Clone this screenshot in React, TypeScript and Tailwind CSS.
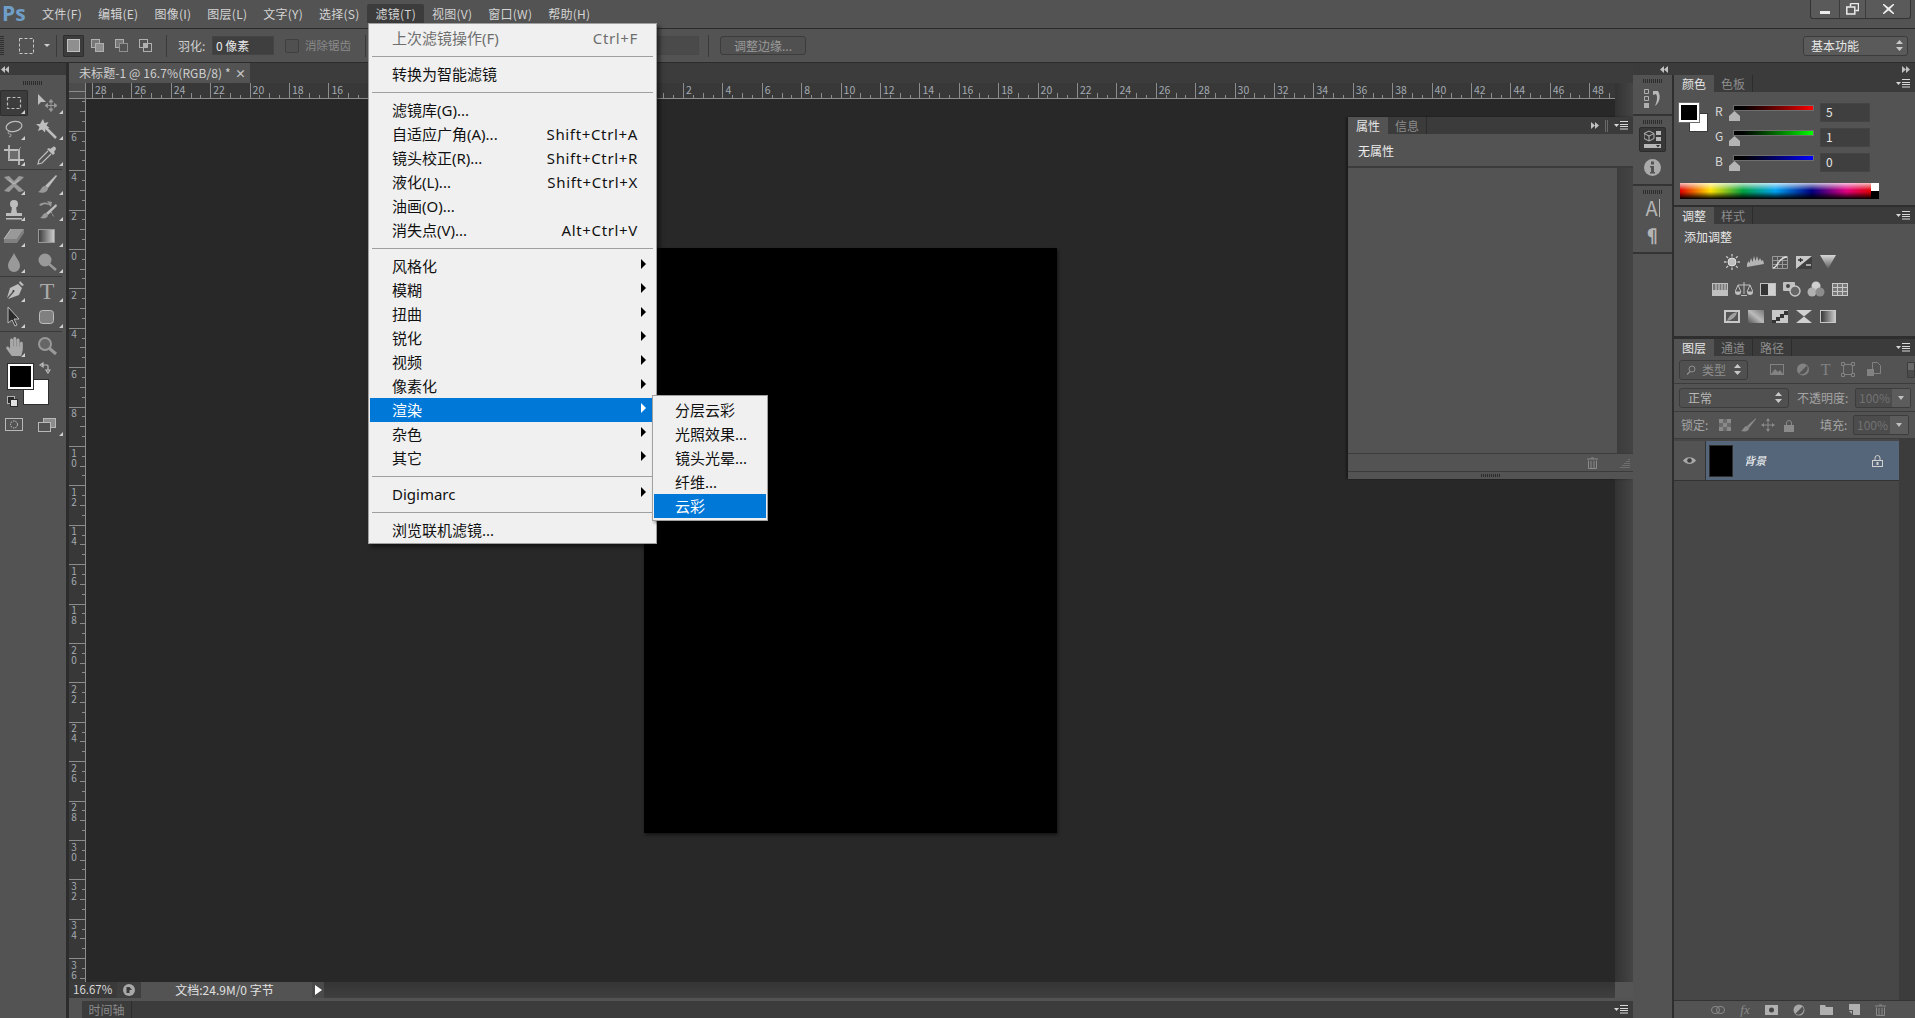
import { FaHandPaper } from "react-icons/fa";

const menuBar = ["文件(F)", "编辑(E)", "图像(I)", "图层(L)", "文字(Y)", "选择(S)", "滤镜(T)", "视图(V)", "窗口(W)", "帮助(H)"];

type Entry = { label?: string; key?: string; sub?: boolean; dim?: boolean; active?: boolean };
const filterMenu: Entry[] = [
  { label: "上次滤镜操作(F)", key: "Ctrl+F", dim: true },
  {},
  { label: "转换为智能滤镜" },
  {},
  { label: "滤镜库(G)..." },
  { label: "自适应广角(A)...", key: "Shift+Ctrl+A" },
  { label: "镜头校正(R)...", key: "Shift+Ctrl+R" },
  { label: "液化(L)...", key: "Shift+Ctrl+X" },
  { label: "油画(O)..." },
  { label: "消失点(V)...", key: "Alt+Ctrl+V" },
  {},
  { label: "风格化", sub: true },
  { label: "模糊", sub: true },
  { label: "扭曲", sub: true },
  { label: "锐化", sub: true },
  { label: "视频", sub: true },
  { label: "像素化", sub: true },
  { label: "渲染", sub: true, active: true },
  { label: "杂色", sub: true },
  { label: "其它", sub: true },
  {},
  { label: "Digimarc", sub: true },
  {},
  { label: "浏览联机滤镜..." },
];
const renderMenu = ["分层云彩", "光照效果...", "镜头光晕...", "纤维...", "云彩"];

const hLabels = Array.from({ length: 39 }, (_, n) => Math.abs(n - 14) * 2);
const vLabels = [6, 4, 2, 0, 2, 4, 6, 8, 10, 12, 14, 16, 18, 20, 22, 24, 26, 28, 30, 32, 34, 36];

function Grip() {
  return <div className="h-[4px] w-[20px] bg-[repeating-linear-gradient(to_right,#2c2c2c_0_1px,transparent_1px_2px)]" />;
}

function PanelMenu() {
  return (
    <svg width="14" height="9" viewBox="0 0 14 9">
      <path d="M0 3h5L2.5 6z" fill="#d8d8d8" />
      <path d="M6 .5h8M6 3.5h8M6 5.5h8M6 8h8" stroke="#d8d8d8" strokeWidth="1" />
    </svg>
  );
}

function DoubleArrow({ left }: { left?: boolean }) {
  return (
    <svg width="8" height="7" viewBox="0 0 8 7">
      {left ? <path d="M4 0v7L0 3.5zM8 0v7L4 3.5z" fill="#c0c0c0" /> : <path d="M0 0v7l4-3.5zM4 0v7l4-3.5z" fill="#c0c0c0" />}
    </svg>
  );
}

function UpDown() {
  return (
    <svg width="7" height="11" viewBox="0 0 7 11">
      <path d="M3.5 0 7 4H0zM3.5 11 7 7H0z" fill="#c8c8c8" />
    </svg>
  );
}

function Tabs({ tabs, right }: { tabs: string[]; right?: React.ReactNode }) {
  return (
    <div className="flex h-[17px] items-stretch bg-[#3b3b3b]">
      {tabs.map((t, i) => (
        <div
          key={t}
          className={
            i === 0
              ? "flex w-[40px] items-center justify-center bg-[#535353] text-[12px] leading-none text-[#e6e6e6]"
              : "flex w-[39px] items-center justify-center border-r border-[#2c2c2c] text-[12px] leading-none text-[#8c8c8c]"
          }
        >
          {t}
        </div>
      ))}
      <div className="ml-auto flex items-center pr-[5px]">{right ?? <PanelMenu />}</div>
    </div>
  );
}

function Tool({ children, corner = true, selected }: { children: React.ReactNode; corner?: boolean; selected?: boolean }) {
  return (
    <div className={selected ? "relative flex h-[26px] items-center justify-center rounded-[2px] bg-[#3c3c3c] shadow-[inset_0_0_0_1px_#2e2e2e]" : "relative flex h-[26px] items-center justify-center"}>
      {children}
      {corner && <span className="absolute bottom-[2px] right-[3px] h-0 w-0 border-b-[4px] border-l-[4px] border-b-[#d0d0d0] border-l-transparent" />}
    </div>
  );
}

const ico = { width: 22, height: 22, viewBox: "0 0 22 22" };
const G = "#999999";
const L = "#bdbdbd";

const toolRows: React.ReactNode[][] = [
  [
    <svg {...ico}><rect x="4.5" y="5.5" width="13" height="11" fill="none" stroke={L} strokeWidth="1.2" strokeDasharray="3 2" /></svg>,
    <svg {...ico}><path d="M2 2v11l3-3h5z" fill={L} /><path d="M15 9v9M10.500 13.500h9M15 7.500l-2 2.500h4zM15 19.500l-2-2.500h4zM9 13.500l2.500-2v4zM21 13.500l-2.500-2v4z" stroke={G} fill={G} strokeWidth="1" /></svg>,
  ],
  [
    <svg {...ico}><ellipse cx="11" cy="8.500" rx="8" ry="5" fill="none" stroke={L} strokeWidth="1.200" transform="rotate(-12 11 8.500)" /><path d="M6 13c-2 2 0 3 1 3s2 2-1 3" fill="none" stroke={G} strokeWidth="1.200" /></svg>,
    <svg {...ico}><path d="M9 9l11 11" stroke={L} strokeWidth="2.500" /><path d="M7 1l1.500 4 4-1-2 3.500 3 2.500-4 .5-.5 4-3-3-4 1.500 1.500-4L0 6l4 .0z" fill={L} /></svg>,
  ],
  [
    <svg {...ico}><path d="M6 1v15h15M1 6h15v15" fill="none" stroke={L} strokeWidth="1.800" /><path d="M6 16L18 3" stroke={G} strokeWidth="1" /><rect x="7" y="7" width="8" height="8" fill="#6c6c6c" /></svg>,
    <svg {...ico}><path d="M12 7L3 16l-1 4 4-1 9-9" fill="none" stroke={L} strokeWidth="1.200" /><path d="M11 5l6 6 2-2-1-1 2-3c0-2-2-3-3-2l-3 2-1-1z" fill={L} /></svg>,
  ],
  [
    <svg {...ico}><path d="M1 4l5-1 5 5 5-5 5 1-3 3-5 4 5 4 3 3-5 1-5-5-5 5-5-1 3-3 5-4-5-4z" fill={G} /><path d="M6 7l5 4 5-4" stroke={L} fill="none" /></svg>,
    <svg {...ico}><path d="M20 2L9 13l3 2L21 3z" fill={L} /><path d="M9 13c-4 0-3 4-7 6 5 2 10 0 10-4z" fill={G} /></svg>,
  ],
  [
    <svg {...ico}><circle cx="11" cy="5" r="4" fill={L} /><path d="M9 8h4l1 6H8zM3 14h16v3H3zM3 19h16v1.500H3z" fill={L} /></svg>,
    <svg {...ico}><path d="M3 6c3-3 7-3 10-1l-2-3 5 1-1 5-2-2c-3-1-6-1-8 1z" fill={G} /><path d="M20 5L10 14l2 2L21 7z" fill={L} /><path d="M10 14c-3 0-3 3-6 5 5 1 8 0 8-3z" fill={G} /><path d="M15 13l3 5" stroke={L} strokeDasharray="1 1" /></svg>,
  ],
  [
    <svg {...ico}><path d="M1 14l7-10h13l-7 10z" fill={G} /><path d="M1 14h13v4H1zM14 14l7-10v4l-7 10z" fill="#808080" /><path d="M8 4l-7 10" stroke={L} /></svg>,
    <svg {...ico}><defs><linearGradient id="gt"><stop offset="0" stopColor="#3a3a3a" /><stop offset="1" stopColor="#d0d0d0" /></linearGradient></defs><rect x="2.500" y="4.500" width="16" height="13" fill="url(#gt)" stroke={G} /></svg>,
  ],
  [
    <svg {...ico}><path d="M11 2c2 5 6 8 6 13a6 6 0 0 1-12 0c0-5 4-8 6-13z" fill={G} /></svg>,
    <svg {...ico}><circle cx="9" cy="9" r="6.500" fill={G} /><path d="M13 13l7 6" stroke={G} strokeWidth="2.500" /></svg>,
  ],
  [
    <svg {...ico}><path d="M17 1l4 4-2 1-3-3zM15 4l4 4-3 7-11 4 6-7-1-1-6 7 3-10z" fill={L} /><circle cx="10.500" cy="11" r="1" fill="#333" /></svg>,
    <span className="font-['Liberation_Serif',serif] text-[24px] leading-none text-[#aaaaaa]">T</span>,
  ],
  [
    <svg {...ico}><path d="M5 1v16l4-3 3 6 2-1-3-6h5z" fill="#2b2b2b" stroke={L} strokeWidth="1" /></svg>,
    <svg {...ico}><rect x="3.500" y="4.500" width="14" height="13" rx="3" fill="#808080" stroke={L} /></svg>,
  ],
  [
    <FaHandPaper className="text-[19px] text-[#a8a8a8]" />,
    <svg {...ico}><circle cx="9" cy="9" r="6" fill="#666" stroke={G} strokeWidth="2" /><path d="M13 13l7 6" stroke={G} strokeWidth="3" /></svg>,
  ],
];

function ToolDivider() {
  return <div className="my-[1px] h-px w-[62px] bg-[#3a3a3a]" />;
}

function Toolbar() {
  return (
    <aside className="flex w-[66px] shrink-0 flex-col bg-[#535353]">
      <div className="flex h-[12px] items-center bg-[#3b3b3b] pl-[1px]">
        <DoubleArrow left />
      </div>
      <div className="flex h-[15px] items-center justify-center">
        <Grip />
      </div>
      {toolRows.map((row, r) => (
        <div key={r}>
          {(r === 3 || r === 7 || r === 9) && <ToolDivider />}
          <div className="grid grid-cols-[28px_38px]">
            <Tool selected={r === 0}>{row[0]}</Tool>
            <Tool corner={r !== 9}>{row[1]}</Tool>
          </div>
        </div>
      ))}
      <div className="relative mt-[1px] h-[52px]">
        <div className="absolute left-[23px] top-[19px] h-[26px] w-[26px] border border-[#2e2e2e] bg-white" />
        <div className="absolute left-[8px] top-[4px] h-[25px] w-[25px] border-2 border-white bg-black outline outline-1 outline-[#2e2e2e]" />
        <svg className="absolute left-[39px] top-[2px]" width="12" height="12" viewBox="0 0 12 12">
          <path d="M1 3l3-2v4zM9 11l2-3H7zM3 3h5q1 0 1 1v4" fill="none" stroke="#bdbdbd" strokeWidth="1.200" />
        </svg>
        <svg className="absolute left-[7px] top-[36px]" width="11" height="11" viewBox="0 0 11 11">
          <rect x="0.500" y="0.500" width="7" height="7" fill="#2a2a2a" stroke="#b0b0b0" />
          <rect x="3.500" y="3.500" width="7" height="7" fill="#e0e0e0" stroke="#2a2a2a" />
        </svg>
      </div>
      <div className="grid h-[26px] grid-cols-[28px_38px]">
        <div className="flex items-center justify-center">
          <svg width="18" height="14" viewBox="0 0 18 14">
            <rect x="0.500" y="0.500" width="17" height="12" fill="none" stroke="#b8b8b8" />
            <circle cx="9" cy="6.500" r="3.500" fill="none" stroke="#d0d0d0" strokeDasharray="1.500 1" />
          </svg>
        </div>
        <Tool>
          <svg width="18" height="14" viewBox="0 0 18 14">
            <rect x="5.500" y="0.500" width="12" height="9" fill="#8d8d8d" stroke="#b8b8b8" />
            <rect x="0.500" y="4.500" width="12" height="9" fill="#535353" stroke="#b8b8b8" />
          </svg>
        </Tool>
      </div>
    </aside>
  );
}

function HRuler() {
  return (
    <svg width="1529" height="16" className="block shrink-0">
      {hLabels.map((v, n) => {
        const x = 6 + n * 39.4;
        return (
          <g key={n}>
            <path d={`M${Math.round(x) + 0.5} 0V16`} stroke="#8c8c8c" />
            {[1, 2, 3].map((q) => (
              <path key={q} d={`M${Math.round(x + q * 9.85) + 0.5} ${q === 2 ? 10 : 12}V16`} stroke="#8c8c8c" />
            ))}
            <text x={x + 3} y={11} fontSize="10.5" fill="#a3aab2">{v}</text>
          </g>
        );
      })}
      <path d="M0 15.500H1529" stroke="#8c8c8c" />
    </svg>
  );
}

function VRuler() {
  return (
    <svg width="17" height="883" className="block shrink-0 overflow-visible bg-[#383838]">
      {[-1, ...vLabels.map((_, i) => i)].map((k) => {
        const y = 130.7 + k * 39.4 - 99;
        return (
          <g key={k}>
            <path d={`M0 ${Math.round(y) + 0.5}H17`} stroke="#8c8c8c" />
            {[1, 2, 3].map((q) => (
              <path key={q} d={`M${q === 2 ? 11 : 13} ${Math.round(y + q * 9.85) + 0.5}H17`} stroke="#8c8c8c" />
            ))}
            {k >= 0 && (
              <text x={5} y={y + 2} fontSize="10" fill="#a3aab2" className="[text-orientation:upright] [writing-mode:vertical-rl]">
                {vLabels[k]}
              </text>
            )}
          </g>
        );
      })}
      <path d="M16.500 0V883" stroke="#8c8c8c" />
    </svg>
  );
}

const scrollCol = "w-[18px] shrink-0 bg-gradient-to-r from-[#333333] to-[#454545]";

function DocArea() {
  return (
    <main className="flex min-w-0 flex-1 flex-col">
      <div className="flex h-[20px] shrink-0 bg-[#3c3c3c]">
        <div className="flex w-[181px] items-center justify-between bg-[#535353] pl-[10px] pr-[4px] text-[12px] leading-none tracking-[0.1px] text-[#cfcfcf]">
          <span>未标题-1 @ 16.7%(RGB/8) *</span>
          <span className="text-[11px] font-bold text-[#c8c8c8]">×</span>
        </div>
      </div>
      <div className="flex h-[16px] shrink-0 bg-[#383838]">
        <div className="h-[16px] w-[17px] shrink-0 border-b border-r border-[#8c8c8c] bg-[#4c4c4c]" />
        <HRuler />
        <div className={scrollCol} />
      </div>
      <div className="flex min-h-0 flex-1">
        <VRuler />
        <div className="flex flex-1 items-center justify-center bg-[#282828]">
          <div className="h-[585px] w-[413px] bg-black shadow-[1px_2px_3px_rgba(0,0,0,0.5)]" />
        </div>
        <div className={scrollCol} />
      </div>
      <div className="flex h-[16px] shrink-0 bg-[#3a3a3a] text-[12px] leading-none">
        <div className="flex w-[48px] items-center pl-[4px] text-[11.5px] text-[#d8d8d8]">16.67%</div>
        <div className="flex w-[24px] items-center justify-center bg-[#3f3f3f]">
          <svg width="12" height="12" viewBox="0 0 12 12">
            <circle cx="6" cy="6" r="6" fill="#a8a8a8" />
            <path d="M3.500 3h3l2.500 3H6.500v3h-3z" fill="#3a3a3a" />
          </svg>
        </div>
        <div className="flex w-[171px] items-center justify-center bg-[#535353] pr-[4px] text-[#e0e0e0]">文档:24.9M/0 字节</div>
        <div className="flex w-[12px] items-center justify-center bg-[#4a4a4a]">
          <span className="h-0 w-0 border-y-[5px] border-l-[7px] border-y-transparent border-l-white" />
        </div>
        <div className="flex-1 bg-gradient-to-b from-[#353535] to-[#3f3f3f]" />
        <div className="w-[18px] bg-[#555555]" />
      </div>
      <div className="mt-[3px] flex h-[17px] shrink-0 bg-[#3c3c3c]">
        <div className="w-[13px] bg-[#535353]" />
        <div className="flex w-[50px] items-center justify-center border-r border-[#2c2c2c] text-[12px] leading-none text-[#8a8a8a]">时间轴</div>
        <div className="ml-auto flex items-center pr-[5px]">
          <PanelMenu />
        </div>
      </div>
    </main>
  );
}

function Dock() {
  return (
    <div className="flex w-[39px] shrink-0 flex-col bg-[#535353]">
      <div className="flex h-[41px] flex-col items-center border-b-2 border-[#343434] pt-[4px]">
        <Grip />
        <svg className="mt-[5px]" width="20" height="22" viewBox="0 0 20 22">
          <path d="M1.500 1.500h4v4h-4zM1.500 8.500h4v4h-4z" fill="none" stroke="#b0b0b0" />
          <rect x="1" y="15" width="5" height="5" fill="#b0b0b0" />
          <path d="M10 3h5c3 5 2 11-3 15 2-5 3-9 1-12l-3 1z" fill="#b8b8b8" />
        </svg>
      </div>
      <div className="flex h-[70px] flex-col items-center border-b-2 border-[#343434] pt-[4px]">
        <Grip />
        <div className="mt-[3px] flex h-[25px] w-[27px] items-center justify-center rounded-[3px] bg-[#383838] shadow-[inset_0_0_0_1px_#2c2c2c]">
          <svg width="18" height="20" viewBox="0 0 18 20">
            <path d="M5 1l5 2.500v5L5 11 0 8.500v-5z" fill="none" stroke="#b8b8b8" />
            <path d="M0 3.500l5 2.500 5-2.500M5 6v5" stroke="#b8b8b8" fill="none" />
            <path d="M12 1h5v4h-5zM12 7h5v4h-5z" fill="#b8b8b8" />
            <rect x="0" y="14" width="17" height="4" fill="#b8b8b8" />
            <path d="M12 15h4l-2 2.500z" fill="#333" />
          </svg>
        </div>
        <svg className="mt-[7px]" width="17" height="17" viewBox="0 0 17 17">
          <circle cx="8.500" cy="8.500" r="8.500" fill="#aaaaaa" />
          <rect x="7" y="2.500" width="3" height="3" fill="#535353" />
          <path d="M6 7h4v6h1v1.500H6V13h1V8.500H6z" fill="#535353" />
        </svg>
      </div>
      <div className="flex h-[68px] flex-col items-center border-b-2 border-[#343434] pt-[4px]">
        <Grip />
        <div className="mt-[3px] flex h-[21px] items-center text-[20px] leading-none text-[#b4b4b4]">
          A<span className="ml-[1px] h-[18px] w-px bg-[#b4b4b4]" />
        </div>
        <div className="mt-[8px] text-[18px] font-bold leading-none text-[#b4b4b4]">¶</div>
      </div>
    </div>
  );
}

const a = { width: 18, height: 16, viewBox: "0 0 18 16" };
const adjRows: React.ReactNode[][] = [
  [
    <svg {...a}><circle cx="9" cy="8" r="4" fill="#c0c0c0" stroke="#e0e0e0" /><path d="M9 0v2.500M9 13.500V16M1 8h2.500M14.500 8H17M3.300 2.300l1.800 1.800M12.900 11.900l1.800 1.800M3.300 13.700l1.800-1.800M12.900 4.100l1.800-1.800" stroke="#c8c8c8" strokeWidth="1.300" /></svg>,
    <svg {...a}><path d="M0 13V10l1.500-3 1 2 1.500-5 1.500 4 1.500-6 1.500 5 1.500-5 1.500 5 1.500-3 1.500 3 1.500-1 1 4z" fill="#b4b4b4" /></svg>,
    <svg {...a}><path d="M1.500 2.500h15v12h-15zM6.500 2.500v12M11.500 2.500v12M1.500 6.500h15M1.500 10.500h15" fill="none" stroke="#999" /><path d="M2 14c5 0 5-11 14-11" stroke="#e0e0e0" fill="none" strokeWidth="1.300" /></svg>,
    <svg {...a}><rect x="1" y="2" width="16" height="13" fill="#c8c8c8" /><path d="M1 15L17 2v13z" fill="#3f3f3f" /><path d="M3 6h5M5.500 4v4" stroke="#2e2e2e" strokeWidth="1.300" /><path d="M11 11h5" stroke="#ddd" strokeWidth="1.300" /></svg>,
    <svg {...a}><defs><linearGradient id="vib" x1="0" y1="0" x2="0" y2="1"><stop offset="0" stopColor="#d8d8d8" /><stop offset="1" stopColor="#5a5a5a" /></linearGradient></defs><path d="M1 1h16L9 15z" fill="url(#vib)" /></svg>,
  ],
  [
    <svg {...a}><rect x="1" y="2" width="16" height="13" fill="#c0c0c0" /><rect x="2" y="3" width="14" height="6" fill="#777" /><path d="M5 3v6M8 3v6M11 3v6M14 3v6" stroke="#d0d0d0" /></svg>,
    <svg {...a}><path d="M9 1v12M3 4h12" stroke="#c0c0c0" /><path d="M3 4l-3 7h6zM15 4l-3 7h6z" fill="none" stroke="#c0c0c0" /><path d="M0 11a3 3 0 0 0 6 0zM12 11a3 3 0 0 0 6 0zM6 14h6v1H6z" fill="#c0c0c0" /></svg>,
    <svg {...a}><rect x="1.500" y="2.500" width="15" height="12" fill="#d0d0d0" stroke="#c0c0c0" /><rect x="2" y="3" width="7" height="11" fill="#353535" /></svg>,
    <svg {...a}><rect x="0" y="1" width="12" height="9" rx="1" fill="#c0c0c0" /><circle cx="5" cy="5" r="2" fill="#444" /><circle cx="12" cy="10" r="5" fill="#666" stroke="#c8c8c8" strokeWidth="1.400" /></svg>,
    <svg {...a}><circle cx="9" cy="5" r="4.500" fill="#d0d0d0" /><circle cx="5" cy="11" r="4.500" fill="#b0b0b0" /><circle cx="13" cy="11" r="4.500" fill="#8c8c8c" /></svg>,
    <svg {...a}><rect x="1.500" y="2.500" width="15" height="12" fill="#777" stroke="#c8c8c8" /><path d="M6.500 2.500v12M11.500 2.500v12M1.500 6.500h15M1.500 10.500h15" stroke="#c8c8c8" /></svg>,
  ],
  [
    <svg {...a}><rect x="1" y="2" width="16" height="13" fill="#c8c8c8" /><rect x="3" y="4" width="12" height="9" fill="#555" /><path d="M4 13c2-6 6-8 10-9-1 5-5 8-10 9z" fill="#a0a0a0" /></svg>,
    <svg {...a}><defs><linearGradient id="pos" x1="0" y1="1" x2="1" y2="0"><stop offset="0" stopColor="#555" /><stop offset="0.5" stopColor="#bbb" /><stop offset="1" stopColor="#777" /></linearGradient></defs><rect x="1" y="2" width="16" height="13" fill="url(#pos)" /></svg>,
    <svg {...a}><rect x="1" y="2" width="16" height="13" fill="#c8c8c8" /><path d="M1 15v-3h4V9h4V6h4V3h4v4h-4v3H9v3H5v2z" fill="#333" /></svg>,
    <svg {...a}><rect x="1" y="2" width="16" height="13" fill="#d0d0d0" /><path d="M1 2l8 6.500L1 15zM17 2L9 8.500 17 15z" fill="#555" /></svg>,
    <svg {...a}><defs><linearGradient id="gm"><stop offset="0" stopColor="#333" /><stop offset="1" stopColor="#ccc" /></linearGradient></defs><rect x="1.500" y="2.500" width="15" height="12" fill="url(#gm)" stroke="#c8c8c8" /></svg>,
  ],
];

function Select({ label, className }: { label: string; className: string }) {
  return (
    <div className={`flex h-[20px] items-center justify-between rounded-[3px] border border-[#3c3c3c] bg-[#505050] pl-[8px] pr-[6px] text-[12px] leading-none text-[#b8b8b8] ${className}`}>
      <span>{label}</span>
      <UpDown />
    </div>
  );
}

function DimInput() {
  return (
    <div className="flex h-[20px] w-[56px] rounded-[2px] border border-[#3c3c3c] bg-[#4c4c4c] text-[12px] leading-none text-[#727272]">
      <div className="flex flex-1 items-center pl-[3px]">100%</div>
      <div className="flex w-[18px] items-center justify-center bg-[#5c5c5c]">
        <span className="h-0 w-0 border-x-[3px] border-t-[4px] border-x-transparent border-t-[#c0c0c0]" />
      </div>
    </div>
  );
}

function ColorRow({ label, value, bar }: { label: string; value: string; bar: string }) {
  return (
    <div className="flex h-[25px] items-start">
      <div className="flex h-[16px] w-[18px] items-center text-[12px] leading-none text-[#d8d8d8]">{label}</div>
      <div className="relative mt-[2px] w-[81px]">
        <div className={`h-[6px] w-full border border-[#6e6e6e] ${bar}`} />
        <svg className="absolute left-[-4px] top-[6px]" width="11" height="10" viewBox="0 0 11 10">
          <path d="M5.500 0 11 5v5H0V5z" fill="#b4b4b4" />
        </svg>
      </div>
      <div className="ml-[6px] flex h-[19px] w-[50px] items-center border border-[#444444] bg-[#3f3f3f] pb-[1px] pl-[5px] text-[12px] leading-none text-[#e8e8e8]">{value}</div>
    </div>
  );
}

const layerTools = { width: 16, height: 15, viewBox: "0 0 16 15" };

function RightPanels() {
  return (
    <div className="flex w-[243px] shrink-0 flex-col border-l-2 border-[#2e2e2e] bg-[#535353]">
      <Tabs tabs={["颜色", "色板"]} />
      <div className="flex h-[113px] flex-col pl-[5px] pt-[11px]">
        <div className="flex">
          <div className="relative h-[30px] w-[30px]">
            <div className="absolute left-[10px] top-[10px] h-[19px] w-[19px] border border-[#3a3a3a] bg-white" />
            <div className="absolute left-0 top-0 h-[19px] w-[20px] border-2 border-white bg-black outline outline-1 outline-[#6e6e6e]" />
          </div>
          <div className="ml-[6px]">
            <ColorRow label="R" value="5" bar="bg-gradient-to-r from-black to-[#ff0000]" />
            <ColorRow label="G" value="1" bar="bg-gradient-to-r from-black to-[#00ff00]" />
            <ColorRow label="B" value="0" bar="bg-gradient-to-r from-black to-[#0000ff]" />
          </div>
        </div>
        <div className="ml-[1px] mt-[5px] flex h-[16px] w-[199px]">
          <div className="flex-1 bg-[linear-gradient(to_bottom,rgba(255,255,255,0.75),transparent_45%,transparent_55%,#000),linear-gradient(to_right,#e00000,#ffe000_16%,#00a040_33%,#00a0f0_50%,#000080_69%,#e00080_87%,#e00000)]" />
          <div className="flex w-[8px] flex-col">
            <div className="flex-1 bg-white" />
            <div className="flex-1 bg-black" />
          </div>
        </div>
      </div>
      <div className="h-[2px] bg-[#2e2e2e]" />
      <Tabs tabs={["调整", "样式"]} />
      <div className="h-[112px]">
        <div className="pl-[10px] pt-[6px] text-[12px] leading-[14px] text-[#e8e8e8]">添加调整</div>
        <div className="ml-[34px] mt-[9px] flex w-[144px] flex-col gap-[9px]">
          {adjRows.map((row, r) => (
            <div key={r} className="flex justify-center">
              {row.map((icon, i) => (
                <div key={i} className="flex h-[18px] w-[24px] items-center justify-center">
                  {icon}
                </div>
              ))}
            </div>
          ))}
        </div>
      </div>
      <div className="h-[3px] bg-[#2e2e2e]" />
      <Tabs tabs={["图层", "通道", "路径"]} />
      <div className="flex h-[28px] items-center border-b border-[#3c3c3c] pl-[5px]">
        <div className="flex h-[20px] w-[70px] items-center rounded-[3px] border border-[#3c3c3c] bg-[#505050] pl-[6px] pr-[6px] text-[12px] leading-none text-[#8e8e8e]">
          <svg width="10" height="10" viewBox="0 0 10 10"><circle cx="6" cy="4" r="3" fill="none" stroke="#8e8e8e" /><path d="M4 6.500 1 9.500" stroke="#8e8e8e" strokeWidth="1.300" /></svg>
          <span className="ml-[6px]">类型</span>
          <span className="ml-auto flex"><UpDown /></span>
        </div>
        <div className="ml-[21px] flex w-[115px] justify-between text-[#828282]">
          <svg {...layerTools}><rect x="1.500" y="2.500" width="13" height="10" fill="none" stroke="#828282" /><path d="M2 12l4-5 3 3 2-2 3 4z" fill="#828282" /></svg>
          <svg {...layerTools}><circle cx="8" cy="7.500" r="6" fill="#828282" /><path d="M4 11.500 12 3.500a6 6 0 0 1-8 8z" fill="#555" /></svg>
          <span className="font-['Liberation_Serif',serif] text-[16px] leading-[15px]">T</span>
          <svg {...layerTools}><path d="M3.500 2.500h9v10h-9z" fill="none" stroke="#828282" /><path d="M1.500 .5h3v3h-3zM11.500 .5h3v3h-3zM1.500 11.500h3v3h-3zM11.500 11.500h3v3h-3z" fill="#555" stroke="#828282" /></svg>
          <svg {...layerTools}><path d="M6.500 .5h5l3 3v8h-8z" fill="none" stroke="#828282" /><rect x="1" y="7" width="7" height="7" fill="#828282" /></svg>
        </div>
        <div className="ml-[25px] flex h-[16px] w-[8px] flex-col rounded-[1px] border border-[#3c3c3c]">
          <div className="flex-1 bg-[#696969]" />
          <div className="flex-1 bg-[#4a4a4a]" />
        </div>
      </div>
      <div className="flex h-[28px] items-center border-b border-[#3c3c3c] pl-[5px] text-[12px] leading-none">
        <Select label="正常" className="w-[110px]" />
        <span className="ml-[8px] w-[58px] text-[#a4a4a4]">不透明度:</span>
        <DimInput />
      </div>
      <div className="flex h-[27px] items-center border-b border-[#3c3c3c] pl-[7px] text-[12px] leading-none">
        <span className="w-[32px] text-[#a4a4a4]">锁定:</span>
        <svg className="ml-[6px]" width="12" height="12" viewBox="0 0 12 12"><path d="M0 0h4v4H0zM8 0h4v4H8zM4 4h4v4H4zM0 8h4v4H0zM8 8h4v4H8z" fill="#8a8a8a" /><path d="M4 0h4v4H4zM0 4h4v4H0zM8 4h4v4H8zM4 8h4v4H4z" fill="#6a6a6a" /></svg>
        <svg className="ml-[9px]" width="16" height="14" viewBox="0 0 16 14"><path d="M16 0 7 8l2 2L16 1z" fill="#8a8a8a" /><path d="M7 8c-3 0-3 3-6 5 5 1 8 0 8-3z" fill="#8a8a8a" /></svg>
        <svg className="ml-[5px]" width="14" height="14" viewBox="0 0 14 14"><path d="M7 0 9 3H5zM7 14l2-3H5zM0 7l3-2v4zM14 7l-3-2v4zM6.500 3h1v8h-1zM3 6.500h8v1H3z" fill="#8a8a8a" /></svg>
        <svg className="ml-[9px]" width="10" height="13" viewBox="0 0 10 13"><path d="M2.500 6V4a2.500 2.500 0 0 1 5 0v2" fill="none" stroke="#8a8a8a" /><rect x="0" y="6" width="10" height="7" fill="#8a8a8a" /></svg>
        <span className="ml-[26px] w-[33px] text-[#a4a4a4]">填充:</span>
        <DimInput />
      </div>
      <div className="flex min-h-0 flex-1 bg-[#474747]">
        <div className="flex-1">
          <div className="mt-[2px] flex h-[40px] border-b border-[#333333]">
            <div className="flex w-[31px] items-center justify-center bg-[#535353]">
              <svg width="13" height="9" viewBox="0 0 13 9"><path d="M0 4.500C3 0 10 0 13 4.500 10 9 3 9 0 4.500z" fill="#a8a8a8" /><circle cx="6.500" cy="4.500" r="2.300" fill="#3c3c3c" /></svg>
            </div>
            <div className="flex flex-1 items-center border-l border-[#333333] bg-[#56667a] pl-[3px] pr-[16px]">
              <div className="h-[32px] w-[24px] border border-[#2e2e2e] bg-black" />
              <span className="ml-[11px] text-[11px] italic leading-none text-white">背景</span>
              <svg className="ml-auto" width="11" height="13" viewBox="0 0 11 13"><path d="M3 6V4a2.500 2.500 0 0 1 5 0v2" fill="none" stroke="#d0d0d0" /><rect x="0.500" y="6.500" width="10" height="6" fill="none" stroke="#d0d0d0" /><rect x="4.500" y="8" width="2" height="3" fill="#d0d0d0" /></svg>
            </div>
          </div>
        </div>
        <div className="w-[16px] bg-[#3c3c3c]" />
      </div>
      <div className="flex h-[18px] shrink-0 items-center border-t border-[#333333] bg-[#535353] pl-[37px]">
        <div className="flex w-[175px] items-center justify-between">
          <svg width="14" height="8" viewBox="0 0 14 8"><rect x=".5" y=".5" width="8" height="7" rx="3.500" fill="none" stroke="#8a8a8a" /><rect x="5.500" y=".5" width="8" height="7" rx="3.500" fill="none" stroke="#8a8a8a" /></svg>
          <span className="font-['Liberation_Serif',serif] text-[13px] italic leading-none text-[#8a8a8a]">fx</span>
          <svg width="13" height="10" viewBox="0 0 13 10"><rect width="13" height="10" fill="#b0b0b0" /><circle cx="6.500" cy="5" r="2.500" fill="#444" /></svg>
          <svg width="12" height="12" viewBox="0 0 12 12"><circle cx="6" cy="6" r="5.500" fill="#a8a8a8" /><path d="M2.500 9.500l7-7A5 5 0 0 1 2.500 9.500z" fill="#535353" /></svg>
          <svg width="13" height="10" viewBox="0 0 13 10"><path d="M0 0h5l1 2h7v8H0z" fill="#b0b0b0" /></svg>
          <svg width="11" height="11" viewBox="0 0 11 11"><path d="M0 0h11v11H4V6H0z" fill="#b0b0b0" /><path d="M0 7h3v3z" fill="#b0b0b0" /></svg>
          <svg width="11" height="12" viewBox="0 0 11 12"><path d="M0 2h11M4 1h3M1.500 3.500v8h8v-8M4 4v7M7 4v7" stroke="#8a8a8a" fill="none" /></svg>
        </div>
      </div>
    </div>
  );
}

function Properties() {
  return (
    <div className="absolute left-[1348px] top-[117px] flex h-[362px] w-[285px] flex-col bg-[#535353] shadow-[-2px_0_2px_rgba(0,0,0,0.35)]">
      <Tabs
        tabs={["属性", "信息"]}
        right={
          <div className="flex items-center gap-[6px]">
            <DoubleArrow />
            <span className="h-[12px] w-[3px] border-x border-[#6a6a6a]" />
            <PanelMenu />
          </div>
        }
      />
      <div className="flex h-[34px] items-center border-b-2 border-[#3c3c3c] pl-[10px] pt-[1px] text-[12px] leading-none text-[#ececec]">无属性</div>
      <div className="flex min-h-0 flex-1 justify-end">
        <div className="w-[16px] bg-gradient-to-r from-[#3c3c3c] to-[#444444]" />
      </div>
      <div className="flex h-[19px] items-center justify-end border-y border-[#3c3c3c] pr-[3px]">
        <svg className="mr-[22px]" width="11" height="12" viewBox="0 0 11 12"><path d="M0 2h11M4 1h3M1.500 3.500v8h8v-8M4 4v7M7 4v7" stroke="#8a8a8a" fill="none" /></svg>
        <svg width="10" height="10" viewBox="0 0 10 10"><path d="M9 1v1M7 3v1M9 3v1M5 5v1M7 5v1M9 5v1M3 7v1M5 7v1M7 7v1M9 7v1M1 9v1M3 9v1M5 9v1M7 9v1M9 9v1" stroke="#8a8a8a" /></svg>
      </div>
      <div className="flex h-[7px] items-center justify-center">
        <div className="h-[3px] w-[20px] bg-[repeating-linear-gradient(to_right,#2c2c2c_0_1px,transparent_1px_2px)]" />
      </div>
    </div>
  );
}

function FilterMenu() {
  return (
    <div className="absolute left-[368px] top-[23px] z-10 w-[289px] border border-[#a0a0a0] bg-[#f0f0f0] px-[1px] pb-[1px] pt-[2px] font-['Noto_Sans','Noto_Sans_CJK_SC',sans-serif] text-[15px] leading-none text-[#111111] shadow-[3px_3px_4px_rgba(0,0,0,0.5)]">
      {filterMenu.map((item, i) =>
        item.label ? (
          <div key={i} className={item.active ? "flex h-[24px] items-center bg-[#0078d7] pl-[22px] pr-[9px] text-white" : "flex h-[24px] items-center pl-[22px] pr-[9px]"}>
            <span className={item.dim ? "text-[#6e6e6e]" : ""}>{item.label}</span>
            {item.key && <span className={item.dim ? "ml-auto pr-[8px] tracking-[0.65px] text-[#6e6e6e]" : "ml-auto pr-[8px] tracking-[0.65px]"}>{item.key}</span>}
            {item.sub && (
              <span className={item.active ? "ml-auto -mt-[5px] h-0 w-0 border-y-[5px] border-l-[5px] border-y-transparent border-l-white" : "ml-auto -mt-[5px] h-0 w-0 border-y-[5px] border-l-[5px] border-y-transparent border-l-black"} />
            )}
          </div>
        ) : (
          <div key={i} className="flex h-[12px] items-center px-[2px]">
            <div className="h-px w-full bg-[#a0a0a0]" />
          </div>
        ),
      )}
    </div>
  );
}

function RenderMenu() {
  return (
    <div className="absolute left-[652px] top-[395px] z-20 w-[116px] border border-[#a0a0a0] bg-[#f0f0f0] px-[1px] pb-[2px] pt-[2px] font-['Noto_Sans','Noto_Sans_CJK_SC',sans-serif] text-[15px] leading-none text-[#111111] shadow-[2px_2px_3px_rgba(0,0,0,0.4)]">
      {renderMenu.map((label, i) => (
        <div key={label} className={i === 4 ? "flex h-[24px] items-center bg-[#0078d7] pl-[21px] text-white" : "flex h-[24px] items-center pl-[21px]"}>
          {label}
        </div>
      ))}
    </div>
  );
}

function OptionsBar() {
  const mode = [
    <svg key="1" width="13" height="13" viewBox="0 0 13 13"><rect x=".5" y=".5" width="12" height="12" fill="#8f8f8f" stroke="#c0c0c0" /></svg>,
    <svg key="2" width="13" height="13" viewBox="0 0 13 13"><rect x=".5" y=".5" width="8" height="8" fill="#777" stroke="#b0b0b0" /><rect x="4.500" y="4.500" width="8" height="8" fill="#8f8f8f" stroke="#b0b0b0" /></svg>,
    <svg key="3" width="13" height="13" viewBox="0 0 13 13"><rect x=".5" y=".5" width="8" height="8" fill="#777" stroke="#b0b0b0" /><rect x="4.500" y="4.500" width="8" height="8" fill="#535353" stroke="#909090" /></svg>,
    <svg key="4" width="13" height="13" viewBox="0 0 13 13"><rect x=".5" y=".5" width="8" height="8" fill="none" stroke="#b0b0b0" /><rect x="4.500" y="4.500" width="8" height="8" fill="none" stroke="#b0b0b0" /><rect x="4.500" y="4.500" width="4" height="4" fill="#b0b0b0" /></svg>,
  ];
  return (
    <div className="flex h-[34px] shrink-0 items-center border-b border-[#2c2c2c] bg-[#535353] text-[12px] leading-none">
      <div className="h-[20px] w-[4px] bg-[repeating-linear-gradient(to_bottom,#2e2e2e_0_1px,transparent_1px_2px)]" />
      <svg className="ml-[15px]" width="15" height="16" viewBox="0 0 15 16">
        <rect x=".5" y=".5" width="14" height="15" fill="none" stroke="#c8c8c8" strokeDasharray="3 2" />
      </svg>
      <span className="ml-[10px] h-0 w-0 border-x-[3px] border-t-[3px] border-x-transparent border-t-[#d0d0d0]" />
      <span className="ml-[6px] h-[22px] w-px bg-[#3a3a3a]" />
      <div className="ml-[6px] flex h-[22px] w-[21px] items-center justify-center rounded-[2px] bg-[#3c3c3c] shadow-[inset_0_0_0_1px_#2e2e2e]">{mode[0]}</div>
      <div className="ml-[7px] flex w-[61px] justify-between">
        {mode.slice(1)}
      </div>
      <span className="ml-[14px] h-[22px] w-px bg-[#3a3a3a]" />
      <span className="ml-[11px] w-[34px] text-[#d0d0d0]">羽化:</span>
      <div className="flex h-[19px] w-[62px] items-center border border-[#444444] bg-[#3f3f3f] pl-[3px] text-[#e8e8e8]">0 像素</div>
      <span className="ml-[11px] h-[14px] w-[14px] rounded-[2px] border border-[#3f3f3f] bg-[#505050]" />
      <span className="ml-[6px] w-[46px] whitespace-nowrap text-[11.5px] text-[#8a8a8a]">消除锯齿</span>
      <span className="ml-[14px] h-[22px] w-px bg-[#3a3a3a]" />
      <div className="ml-[274px] h-[19px] w-[59px] border border-[#484848] bg-[#4a4a4a]" />
      <span className="ml-[9px] h-[22px] w-px bg-[#3a3a3a]" />
      <div className="ml-[11px] flex h-[19px] w-[86px] items-center justify-center rounded-[3px] border border-[#3c3c3c] bg-[#505050] text-[#9a9a9a]">调整边缘...</div>
      <div className="ml-auto mr-[7px] flex h-[20px] w-[105px] items-center justify-between rounded-[3px] border border-[#3c3c3c] bg-[#5a5a5a] pl-[7px] pr-[4px] text-[#e6e6e6]">
        <span>基本功能</span>
        <UpDown />
      </div>
    </div>
  );
}

export default function App() {
  return (
    <div className="relative flex h-[1018px] w-[1915px] flex-col overflow-hidden bg-[#535353] font-['Noto_Sans_CJK_SC',sans-serif]">
      <header className="flex h-[29px] shrink-0 items-start border-b border-[#2c2c2c] bg-[#535353]">
        <span className="ml-[2px] mt-[1px] w-[26px] font-['Open_Sans',sans-serif] text-[21px] font-bold leading-[24px] text-[#6f9fc8]">Ps</span>
        <nav className="ml-[6px] mt-[4px] flex text-[12px] leading-none tracking-[0.25px] text-[#d4d4d4]">
          {menuBar.map((m) => (
            <div key={m} className={m === "滤镜(T)" ? "flex h-[19px] items-center rounded-t-[2px] bg-[#3c3c3c] px-[8px]" : "flex h-[19px] items-center px-[8px]"}>
              {m}
            </div>
          ))}
        </nav>
        <div className="ml-auto mr-[4px] flex h-[19px] w-[101px] rounded-b-[3px] border border-t-0 border-[#333333] bg-[#5a5a5a]">
          <div className="flex w-[28px] items-end justify-center pb-[4px]">
            <span className="h-[3px] w-[10px] bg-[#ececec]" />
          </div>
          <div className="flex w-[27px] items-center justify-center border-x border-[#3c3c3c]">
            <svg width="13" height="12" viewBox="0 0 13 12">
              <path d="M4.500 .5h8v7h-3M4.500 .5v3" fill="none" stroke="#ececec" strokeWidth="1.500" />
              <rect x=".8" y="4" width="8" height="7" fill="none" stroke="#ececec" strokeWidth="1.500" />
            </svg>
          </div>
          <div className="flex flex-1 items-center justify-center">
            <svg width="11" height="10" viewBox="0 0 11 10">
              <path d="M1 0l4.500 3.500L10 0h1v1L7 5l4 4v1h-1L5.500 6.500 1 10H0V9l4-4-4-4V0z" fill="#ececec" />
            </svg>
          </div>
        </div>
      </header>
      <OptionsBar />
      <div className="flex min-h-0 flex-1">
        <Toolbar />
        <div className="w-[3px] shrink-0 bg-[#2c2c2c]" />
        <DocArea />
        <div className="flex w-[282px] shrink-0 flex-col">
          <div className="flex h-[12px] shrink-0 items-center justify-between bg-[#3b3b3b] pl-[27px] pr-[5px]">
            <DoubleArrow left />
            <DoubleArrow />
          </div>
          <div className="flex min-h-0 flex-1">
            <Dock />
            <RightPanels />
          </div>
        </div>
      </div>
      <Properties />
      <FilterMenu />
      <RenderMenu />
    </div>
  );
}
